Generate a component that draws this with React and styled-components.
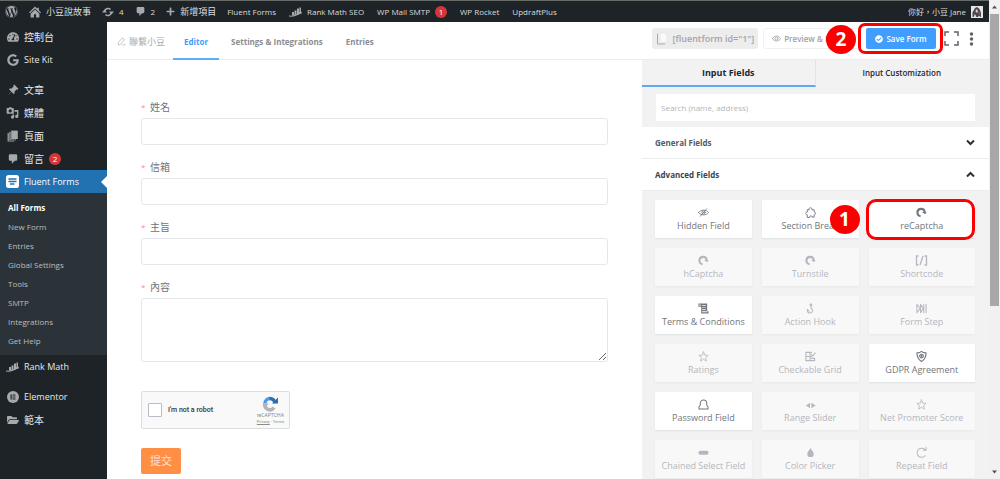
import React from 'react';
import styled, { createGlobalStyle, css } from 'styled-components';
import { FaWordpress, FaTachometerAlt, FaGoogle, FaFolderOpen, FaPlus, FaCheckCircle } from 'react-icons/fa';

const GlobalStyle = createGlobalStyle`
  *, *::before, *::after { box-sizing: border-box; }
  body {
    margin: 0;
    font-family: "Open Sans", "Noto Sans CJK TC", sans-serif;
    font-size: 8px;
    line-height: 12px;
    color: #6f7278;
    background: #fff;
  }
  button, input, textarea { font: inherit; color: inherit; margin: 0; }
  button { cursor: pointer; }
  a { color: inherit; text-decoration: none; }
  ul { list-style: none; margin: 0; padding: 0; }
  svg { display: block; flex: none; }
`;

/* ---------- shell ---------- */

const Screen = styled.div`
  display: flex;
  height: 100vh;
  overflow: hidden;
`;

const Page = styled.div`
  flex: 1;
  min-width: 0;
  display: flex;
  flex-direction: column;
`;

const Body = styled.div`
  flex: 1;
  min-height: 0;
  display: flex;
`;

const ScrollTrack = styled.div`
  flex: none;
  width: 11px;
  display: flex;
  flex-direction: column;
  align-items: center;
  background: #f1f1f2;
`;

const ScrollArrow = styled.div`
  height: 14px;
  display: flex;
  align-items: center;
  color: #505050;
`;

const ScrollThumb = styled.div`
  width: 9px;
  height: 61%;
  margin-bottom: auto;
  background: #a8a8ab;
`;

/* ---------- admin bar ---------- */

const AdminBar = styled.nav`
  flex: none;
  height: 22px;
  display: flex;
  align-items: center;
  gap: 11px;
  padding: 0 6px 0 5px;
  border-top: 1px solid #686c68;
  background: #1d2327;
  color: #dcdcde;
`;

const AdminLink = styled.a`
  display: flex;
  align-items: center;
  gap: 5px;
  white-space: nowrap;
  &:lang(zh-Hant) { font-size: 9px; }
  svg { color: #a7aaad; }
`;

const PluginLinks = styled.div`
  display: flex;
  align-items: center;
  gap: 13px;
`;

const Greeting = styled(AdminLink)`
  margin-left: auto;
`;

const CountBadge = styled.span`
  width: 12px;
  height: 12px;
  border-radius: 50%;
  background: #d63638;
  color: #fff;
  font-size: 8px;
  line-height: 12px;
  text-align: center;
`;

/* ---------- side menu ---------- */

const SideMenu = styled.aside`
  flex: none;
  width: 107px;
  padding-top: 3px;
  background: #1d2327;
  color: #f0f0f1;
`;

const MenuItem = styled.li`
  margin-top: ${(p) => (p.$spaced ? 7 : 0)}px;
`;

const MenuLink = styled.a`
  position: relative;
  display: flex;
  align-items: center;
  gap: 5px;
  height: 23px;
  padding-left: 6px;
  font-size: 9px;
  background: ${(p) => (p.$current ? '#2271b1' : 'transparent')};
  color: ${(p) => (p.$current ? '#fff' : '#e8e8ea')};
  &:lang(zh-Hant) { font-size: 10px; }
  svg { color: ${(p) => (p.$current ? '#fff' : '#a7aaad')}; }
  ${(p) => p.$current && css`
    &::after {
      content: "";
      position: absolute;
      right: 0;
      top: 6px;
      border: 6px solid transparent;
      border-left: 0;
      border-right-color: #fff;
    }
  `}
`;

const SubMenu = styled.ul`
  padding: 5px 0;
  background: #2c3338;
`;

const SubLink = styled.a`
  display: block;
  padding-left: 8px;
  line-height: 19px;
  font-weight: ${(p) => (p.$current ? 700 : 400)};
  color: ${(p) => (p.$current ? '#fff' : '#b9bdc1')};
`;

/* ---------- editor header ---------- */

const Main = styled.main`
  flex: 1;
  min-width: 0;
  display: flex;
  flex-direction: column;
  background: #fff;
`;

const EditorHeader = styled.header`
  flex: none;
  height: 38px;
  display: flex;
  align-items: stretch;
  padding: 0 15px 0 10px;
  border-bottom: 1px solid #ebecee;
`;

const FormTitle = styled.button`
  display: flex;
  align-items: center;
  gap: 3px;
  width: 56px;
  padding: 2px 0 0;
  border: 0;
  background: none;
  color: #a9abb0;
  font-size: 9px;
  white-space: nowrap;
`;

const HeaderTab = styled.a`
  display: flex;
  align-items: center;
  padding: 3px 11px 0;
  margin-bottom: -1px;
  margin-right: 1px;
  border-bottom: 2px solid ${(p) => (p.$active ? '#5fadfb' : 'transparent')};
  color: ${(p) => (p.$active ? '#409eff' : '#8a8d93')};
  font-weight: 700;
  white-space: nowrap;
`;

const HeaderActions = styled.div`
  display: flex;
  align-items: center;
  margin-left: auto;
  padding-bottom: 4px;
`;

const Shortcode = styled.button`
  display: flex;
  align-items: center;
  gap: 5px;
  height: 21px;
  padding: 0 4px;
  border: 0;
  border-radius: 3px;
  background: #ededee;
  color: #a2a4aa;
  font-size: 9px;
  font-weight: 600;
  white-space: nowrap;
`;

const PreviewButton = styled.button`
  display: flex;
  align-items: center;
  gap: 3px;
  height: 21px;
  margin: 0 6px 0 5px;
  padding: 0 8px;
  border: 1px solid #eff0f2;
  border-radius: 3px;
  background: #fff;
  color: #a0a2a8;
  font-weight: 600;
  white-space: nowrap;
`;

const Marked = styled.div`
  position: relative;
`;

const SaveButton = styled.button`
  display: flex;
  align-items: center;
  gap: 3px;
  height: 21px;
  width: 70px;
  justify-content: center;
  padding: 0;
  border: 0;
  border-radius: 2px;
  background: #409eff;
  color: #fff;
  font-weight: 600;
  white-space: nowrap;
`;

const IconButton = styled.button`
  display: flex;
  padding: 0;
  border: 0;
  background: none;
  color: #5f6368;
`;

const HeaderIcons = styled.div`
  display: flex;
  align-items: center;
  gap: 10px;
  margin-left: 8px;
`;

/* red tutorial marks lying over the controls */
const MarkFrame = styled.span`
  position: absolute;
  inset: ${(p) => p.$inset};
  border: 3px solid #fb0000;
  border-radius: ${(p) => p.$radius}px;
  pointer-events: none;
`;

const MarkNumber = styled.span`
  position: absolute;
  top: 50%;
  right: 100%;
  width: 30px;
  height: 29px;
  margin: -14px ${(p) => p.$gap}px 0 0;
  border-radius: 50%;
  background: #fb0000;
  color: #fff;
  font-size: 19px;
  font-weight: 700;
  line-height: 28px;
  text-align: center;
`;

/* ---------- form canvas ---------- */

const Columns = styled.div`
  flex: 1;
  min-height: 0;
  display: grid;
  grid-template-columns: minmax(0, 535fr) minmax(0, 347fr);
`;

const FormCanvas = styled.form`
  padding: 36px 34px 5px;
  overflow: hidden;
`;

const Field = styled.div`
  margin-bottom: 11px;
`;

const FieldLabel = styled.label`
  display: flex;
  gap: 5px;
  font-size: 10px;
  line-height: 22px;
  &::before { content: "*"; width: 4px; color: #f78989; font-size: 8px; }
`;

const inputBox = css`
  display: block;
  width: 100%;
  padding: 0 8px;
  border: 1px solid #e6e7eb;
  border-radius: 3px;
  background: #fff;
`;

const TextInput = styled.input`
  ${inputBox}
  height: 27px;
`;

const TextArea = styled.textarea`
  ${inputBox}
  height: 64px;
  resize: vertical;
`;

const Captcha = styled.div`
  display: flex;
  align-items: center;
  width: 149px;
  height: 38px;
  margin: 29px 0 19px;
  padding: 0 5px 0 6px;
  border: 1px solid #dcdddf;
  border-radius: 2px;
  background: #f9f9f9;
  font-family: Roboto, sans-serif;
`;

const CaptchaLabel = styled.label`
  display: flex;
  align-items: center;
  gap: 6px;
  color: #333;
  font-size: 7px;
  font-weight: 500;
  white-space: nowrap;
`;

const CaptchaCheck = styled.input`
  appearance: none;
  width: 14px;
  height: 14px;
  border: 1px solid #b9bbc6;
  border-radius: 1px;
  background: #fff;
`;

const CaptchaBrand = styled.div`
  display: flex;
  flex-direction: column;
  align-items: center;
  margin-left: auto;
  color: #8b8b8b;
  font-size: 5px;
  line-height: 7px;
  white-space: nowrap;
`;

const CaptchaLinks = styled.span`
  font-size: 4px;
  line-height: 6px;
  a:first-child { text-decoration: underline; }
`;

const SubmitButton = styled.button`
  display: block;
  height: 26px;
  padding: 0 9px;
  border: 0;
  border-radius: 2px;
  background: #ff8f45;
  color: #ffe0d2;
  font-size: 11px;
`;

/* ---------- fields panel ---------- */

const Panel = styled.section`
  overflow: hidden;
  background: #f2f2f2;
`;

const PanelTabs = styled.div`
  display: grid;
  grid-template-columns: 1fr 1fr;
`;

const PanelTab = styled.button`
  height: 27px;
  padding: 0;
  border: 0;
  border-bottom: 2px solid ${(p) => (p.$active ? '#5fa9f4' : 'transparent')};
  border-right: 1px solid ${(p) => (p.$active ? '#e2e3e5' : 'transparent')};
  background: none;
  color: #1e2633;
  font-size: ${(p) => (p.$active ? 9 : 8)}px;
  line-height: 22px;
  font-weight: ${(p) => (p.$active ? 700 : 600)};
`;

const SearchBox = styled.input`
  display: block;
  width: calc(100% - 28px);
  height: 27px;
  margin: 7px 14px 6px;
  padding: 0 5px;
  border: 0;
  background: #fff;
  &::placeholder { color: #b3b5bc; opacity: 1; }
`;

const SectionToggle = styled.button`
  display: flex;
  align-items: center;
  justify-content: space-between;
  width: 100%;
  height: 32px;
  padding: 0 14px 0 13px;
  border: 0;
  border-bottom: 1px solid #ebecee;
  background: #fff;
  color: ${(p) => (p.$open ? '#3d434d' : '#555a63')};
  font-weight: 700;
`;

const CardGrid = styled.div`
  display: grid;
  grid-template-columns: 1fr 1fr 1.1fr;
  gap: 10px;
  padding: 9px 14px 9px 13px;
`;

const Card = styled.button`
  display: flex;
  flex-direction: column;
  align-items: center;
  justify-content: center;
  gap: 1px;
  width: 100%;
  height: 38px;
  padding: 0;
  border: 0;
  border-radius: 1px;
  background: ${(p) => (p.$muted ? '#f8f8f8' : '#fff')};
  box-shadow: 0 1px 2px ${(p) => (p.$muted ? '#e8e8e9' : '#dedfe1')};
  color: ${(p) => (p.$muted ? '#b4b7be' : '#73767d')};
  font-size: 9px;
  line-height: 13px;
  white-space: nowrap;
`;

/* ---------- drawings ---------- */

const Line = ({ size = 11, w = 1.8, children }) => (
  <svg width={size} height={size} viewBox="0 0 24 24" fill="none" stroke="currentColor" strokeWidth={w} strokeLinecap="round" strokeLinejoin="round">
    {children}
  </svg>
);

const HomeIcon = () => (
  <svg width="12" height="12" viewBox="0 0 22 22" fill="currentColor">
    <path d="M11 1l4 4V3h3v5l4 4-1.500 1.500L11 4.500l-9.500 9L0 12z" />
    <path d="M11 6.500l8 7.500v7h-6v-6H9v6H3v-7z" />
  </svg>
);

const UpdateIcon = () => (
  <svg width="12" height="12" viewBox="0 0 24 24">
    <path d="M5 12a7 7 0 0 1 12-5M19 12a7 7 0 0 1-12 5" fill="none" stroke="currentColor" strokeWidth="3" />
    <path d="M14 11h10l-5 6zM10 13H0l5-6z" fill="currentColor" />
  </svg>
);

const PinIcon = () => (
  <svg width="12" height="12" viewBox="0 0 20 20" fill="currentColor">
    <path d="M12 1l7 7-1.500 1.500-1.500-.5-3.500 3.500c.5 2 0 3.500-1 4.500L7.500 13 1 19l6-6.500L3 8.500c1-1 2.500-1.500 4.500-1L11 4l-.5-1.500z" />
  </svg>
);

const CommentIcon = ({ size = 11 }) => (
  <svg width={size} height={size} viewBox="0 0 20 20" fill="currentColor">
    <path d="M5 2h10a2 2 0 0 1 2 2v7a2 2 0 0 1-2 2h-2l-5 5v-5H5a2 2 0 0 1-2-2V4a2 2 0 0 1 2-2z" />
  </svg>
);

const RankMathIcon = () => (
  <svg width="13" height="11" viewBox="0 0 26 22" fill="currentColor">
    <path d="M6 12h4v7H6zM11 9h4v9h-4zM16 5h4v12h-4zM21 3h3v12h-3z" />
    <path d="M0 19c7 1 14-1 21-6l-1-2 6 1-2 5-1-2c-7 5-15 7-23 6z" />
  </svg>
);

const MediaIcon = () => (
  <svg width="13" height="13" viewBox="0 0 20 20" fill="currentColor">
    <path fillRule="evenodd" d="M2 3h2l1-1h3l1 1h2a1 1 0 0 1 1 1v7a1 1 0 0 1-1 1H2a1 1 0 0 1-1-1V4a1 1 0 0 1 1-1zm4.500 2a2.500 2.500 0 1 0 0 5 2.500 2.500 0 0 0 0-5z" />
    <path d="M13 6h6v10a2.500 2.500 0 1 1-2-2.400V9h-4zM10 13h2.500v4a2.500 2.500 0 1 1-2.500-2.500z" />
  </svg>
);

const PagesIcon = () => (
  <svg width="12" height="12" viewBox="0 0 20 20" fill="currentColor">
    <path d="M7 1h11v14H7z" />
    <path d="M4 3h2v13h9v1H4z" />
    <path d="M1 5h2v13h9v1H1z" />
  </svg>
);

const FluentIcon = () => (
  <svg width="13" height="13" viewBox="0 0 26 26">
    <rect width="26" height="26" rx="5" fill="#fff" />
    <path d="M5 8h16M5 13h16M8 18h9" stroke="#2271b1" strokeWidth="3" />
  </svg>
);

const ElementorIcon = () => (
  <svg width="12" height="12" viewBox="0 0 24 24">
    <circle cx="12" cy="12" r="12" fill="currentColor" />
    <path d="M7 7h2.400v10H7zM11 7h6v2h-6zM11 11h6v2h-6zM11 15h6v2h-6z" fill="#1d2327" />
  </svg>
);

const CopyIcon = () => (
  <svg width="12" height="14" viewBox="0 0 24 28">
    <path d="M8 2h9l5 5v14H8z" fill="#f9f9fa" stroke="#dcdde0" />
    <path d="M3 3v21h15" fill="none" stroke="#a8aab0" strokeWidth="2" />
  </svg>
);

const PencilIcon = () => (
  <Line size={9}>
    <path d="M15 3l5 4L9 20l-6 1 1-6zM15 21h7" />
  </Line>
);

const EyeIcon = () => (
  <Line size={9} w={2.2}>
    <path d="M1 12c5-9 17-9 22 0-5 9-17 9-22 0z" />
    <circle cx="12" cy="12" r="4" />
  </Line>
);

const FullscreenIcon = () => (
  <svg width="15" height="15" viewBox="0 0 30 30" fill="none" stroke="currentColor" strokeWidth="3">
    <path d="M2 10V2h8M20 2h8v8M28 20v8h-8M10 28H2v-8" />
  </svg>
);

const MoreIcon = () => (
  <svg width="5" height="14" viewBox="0 0 10 28" fill="currentColor">
    <circle cx="5" cy="4" r="3.500" />
    <circle cx="5" cy="14" r="3.500" />
    <circle cx="5" cy="24" r="3.500" />
  </svg>
);

const Chevron = ({ up }) => (
  <svg width="9" height="9" viewBox="0 0 18 18" fill="none" stroke="#2c3038" strokeWidth="4">
    <path d={up ? 'M2 13l7-7 7 7' : 'M2 5l7 7 7-7'} />
  </svg>
);

const Triangle = ({ up }) => (
  <svg width="5" height="4" viewBox="0 0 10 8" fill="#505050">
    <path d={up ? 'M5 1l5 6H0z' : 'M5 7l5-6H0z'} />
  </svg>
);

const Avatar = () => (
  <svg width="12" height="12" viewBox="0 0 24 24">
    <rect width="24" height="24" fill="#e6e6e6" />
    <path d="M3 22V13l5-9 4-2 5 4 3 8v8z" fill="#43464b" />
    <path d="M10 6l4 3-1 5-4-2z" fill="#d9c9c4" />
    <path d="M14 12l5 2-3 4z" fill="#c64b4b" />
    <path d="M5 22l3-6 3 6zM14 22l2-3 3 3z" fill="#dcdcdc" />
  </svg>
);

const RecaptchaLogo = () => (
  <svg width="17" height="16" viewBox="0 0 34 32" fill="none" strokeWidth="7">
    <path d="M6 15A10 10 0 0 1 16 5" stroke="#4a9bf0" />
    <path d="M15 5a10 10 0 0 1 11 9" stroke="#2a6fae" />
    <path d="M20 15h12V3z" fill="#2a6fae" />
    <path d="M6 15a10 10 0 0 0 18 8" stroke="#b4b4b4" />
    <path d="M1 15h13L5 25z" fill="#b4b4b4" />
  </svg>
);

const Swirl = () => (
  <svg width="11" height="11" viewBox="0 0 24 24" fill="none" stroke="currentColor" strokeWidth="4.500">
    <path d="M10 20A8 8 0 1 1 19 11" />
    <path d="M13 11h10l-3 5z" fill="currentColor" stroke="none" />
  </svg>
);

const StarIcon = () => (
  <Line><path d="M12 2l3 7 7 .6-5.400 4.700L18.400 22 12 17.800 5.600 22l1.800-7.700L2 9.600 9 9z" /></Line>
);

const cardIcons = {
  hidden: <Line><path d="M1 12c5-7 17-7 22 0-5 7-17 7-22 0zM19 4L5 20" /><circle cx="12" cy="12" r="3.500" /></Line>,
  puzzle: <Line w={2}><path d="M5 22v-5c-5 0-5-6 0-6V6h4c-2-6 8-6 6 0h5v5c4 0 4 6 0 6v5h-5c1-4-6-4-5 0z" /></Line>,
  swirl: <Swirl />,
  shortcode: <svg width="13" height="11" viewBox="0 0 26 22" fill="none" stroke="currentColor" strokeWidth="2.600"><path d="M7 2H3v18h4M19 2h4v18h-4M16 2l-6 18" /></svg>,
  scroll: <svg width="11" height="11" viewBox="0 0 24 24" fill="currentColor"><path fillRule="evenodd" d="M1 1h19v17h3v5H7V8H1zM9 5v1.500h8V5zm0 4v1.500h8V9zm0 4v1.500h8V13zm0 5v2h11v-2zM3 3v3h3V3z" /></svg>,
  hook: <Line w={2.2}><circle cx="13" cy="4" r="2" /><path d="M13 6v5c5 3 5 10-2 11-6 0-6-4-6-8l4 4" /></Line>,
  step: <Line w={2.2}><path d="M2 3v18l7-9zM10 3v18l6-9zM17 3v18M22 3v18M10 3l6 9" /></Line>,
  star: <StarIcon />,
  grid: <Line w={2.4}><path d="M2 3h12M2 3v18h19v-5M2 12h12M11 3v18M14 8l3 3 5-7M14 16h7" /></Line>,
  shield: <Line w={2.4}><path d="M12 1c3 3 6 3 10 3 0 9-3 15-10 19C5 19 2 13 2 4c4 0 7 0 10-3z" /><circle cx="12" cy="11" r="4" /><circle cx="12" cy="11" r="1" /></Line>,
  lock: <Line w={2.2}><path d="M2 22h20v-4l-3-5V9c0-9-14-9-14 0v4l-3 5z" /></Line>,
  slider: <svg width="11" height="11" viewBox="0 0 24 24" fill="currentColor"><path d="M2 14l9-6v12zM23 14l-9-6v12z" /></svg>,
  select: <svg width="11" height="11" viewBox="0 0 24 24"><rect x="1" y="8" width="22" height="9" rx="4" fill="currentColor" /></svg>,
  drop: <svg width="11" height="11" viewBox="0 0 24 24" fill="currentColor"><path d="M12 2c3 5 7 9 7 13a7 7 0 0 1-14 0c0-4 4-8 7-13z" /></svg>,
  repeat: <Line w={2.2}><path d="M20 19a10 10 0 1 1 0-13M22 1v6h-6" /></Line>,
};

/* ---------- data ---------- */

const menu = [
  { label: '控制台', zh: true, icon: <FaTachometerAlt size={12} /> },
  { label: 'Site Kit', icon: <FaGoogle size={12} /> },
  { label: '文章', zh: true, spaced: true, icon: <PinIcon /> },
  { label: '媒體', zh: true, icon: <MediaIcon /> },
  { label: '頁面', zh: true, icon: <PagesIcon /> },
  { label: '留言', zh: true, icon: <CommentIcon size={12} />, count: 2 },
  {
    label: 'Fluent Forms',
    icon: <FluentIcon />,
    children: ['All Forms', 'New Form', 'Entries', 'Global Settings', 'Tools', 'SMTP', 'Integrations', 'Get Help'],
  },
  { label: 'Rank Math', icon: <RankMathIcon /> },
  { label: 'Elementor', spaced: true, icon: <ElementorIcon /> },
  { label: '範本', zh: true, icon: <FaFolderOpen size={12} /> },
];

const cards = [
  ['Hidden Field', 'hidden', true],
  ['Section Break', 'puzzle', true],
  ['reCaptcha', 'swirl', true],
  ['hCaptcha', 'swirl'],
  ['Turnstile', 'swirl'],
  ['Shortcode', 'shortcode'],
  ['Terms & Conditions', 'scroll', true],
  ['Action Hook', 'hook'],
  ['Form Step', 'step'],
  ['Ratings', 'star'],
  ['Checkable Grid', 'grid'],
  ['GDPR Agreement', 'shield', true],
  ['Password Field', 'lock', true],
  ['Range Slider', 'slider'],
  ['Net Promoter Score', 'star'],
  ['Chained Select Field', 'select'],
  ['Color Picker', 'drop'],
  ['Repeat Field', 'repeat'],
];

const IconSlot = styled.span`
  flex: none;
  width: 13px;
  display: flex;
  justify-content: center;
`;

export default function App() {
  return (
    <Screen>
      <GlobalStyle />
      <Page>
        <AdminBar>
          <AdminLink href="#wp" aria-label="WordPress"><FaWordpress size={13} /></AdminLink>
          <AdminLink href="#site" lang="zh-Hant"><HomeIcon />小豆說故事</AdminLink>
          <AdminLink href="#updates"><UpdateIcon />4</AdminLink>
          <AdminLink href="#comments"><CommentIcon />2</AdminLink>
          <AdminLink href="#new" lang="zh-Hant"><FaPlus size={9} />新增項目</AdminLink>
          <PluginLinks>
            <AdminLink href="#fluent">Fluent Forms</AdminLink>
            <AdminLink href="#rank"><RankMathIcon />Rank Math SEO</AdminLink>
            <AdminLink href="#smtp">WP Mail SMTP<CountBadge>1</CountBadge></AdminLink>
            <AdminLink href="#rocket">WP Rocket</AdminLink>
            <AdminLink href="#updraft">UpdraftPlus</AdminLink>
          </PluginLinks>
          <Greeting href="#profile"><span>你好，小豆 Jane</span><Avatar /></Greeting>
        </AdminBar>
        <Body>
          <SideMenu>
            <ul>
              {menu.map((m) => (
                <MenuItem key={m.label} $spaced={m.spaced}>
                  <MenuLink href="#menu" $current={!!m.children} lang={m.zh ? 'zh-Hant' : 'en'}>
                    <IconSlot>{m.icon}</IconSlot>
                    {m.label}
                    {m.count && <CountBadge>{m.count}</CountBadge>}
                  </MenuLink>
                  {m.children && (
                    <SubMenu>
                      {m.children.map((c, i) => (
                        <li key={c}><SubLink href="#sub" $current={i === 0}>{c}</SubLink></li>
                      ))}
                    </SubMenu>
                  )}
                </MenuItem>
              ))}
            </ul>
          </SideMenu>
          <Main>
            <EditorHeader>
              <FormTitle type="button"><PencilIcon />聯繫小豆</FormTitle>
              <HeaderTab href="#editor" $active>Editor</HeaderTab>
              <HeaderTab href="#settings">Settings &amp; Integrations</HeaderTab>
              <HeaderTab href="#entries">Entries</HeaderTab>
              <HeaderActions>
                <Shortcode type="button"><CopyIcon />[fluentform id="1"]</Shortcode>
                <PreviewButton type="button"><EyeIcon />Preview &amp; Design</PreviewButton>
                <Marked>
                  <SaveButton type="button"><FaCheckCircle size={8} />Save Form</SaveButton>
                  <MarkFrame $inset="-5px -7px -5px -8px" $radius={7} />
                  <MarkNumber $gap={10}>2</MarkNumber>
                </Marked>
                <HeaderIcons>
                  <IconButton type="button" aria-label="Fullscreen"><FullscreenIcon /></IconButton>
                  <IconButton type="button" aria-label="More"><MoreIcon /></IconButton>
                </HeaderIcons>
              </HeaderActions>
            </EditorHeader>
            <Columns>
              <FormCanvas>
                {['姓名', '信箱', '主旨'].map((label, i) => (
                  <Field key={label}>
                    <FieldLabel htmlFor={`field-${i}`}>{label}</FieldLabel>
                    <TextInput id={`field-${i}`} />
                  </Field>
                ))}
                <FieldLabel htmlFor="field-message">內容</FieldLabel>
                <TextArea id="field-message" />
                <Captcha>
                  <CaptchaLabel><CaptchaCheck type="checkbox" />I'm not a robot</CaptchaLabel>
                  <CaptchaBrand>
                    <RecaptchaLogo />
                    reCAPTCHA
                    <CaptchaLinks><a href="#privacy">Privacy</a> - <a href="#terms">Terms</a></CaptchaLinks>
                  </CaptchaBrand>
                </Captcha>
                <SubmitButton type="button">提交</SubmitButton>
              </FormCanvas>
              <Panel>
                <PanelTabs>
                  <PanelTab type="button" $active>Input Fields</PanelTab>
                  <PanelTab type="button">Input Customization</PanelTab>
                </PanelTabs>
                <SearchBox type="text" aria-label="Search fields" placeholder="Search (name, address)" />
                <SectionToggle type="button">General Fields<Chevron /></SectionToggle>
                <SectionToggle type="button" $open>Advanced Fields<Chevron up /></SectionToggle>
                <CardGrid>
                  {cards.map(([label, icon, enabled]) => (
                    <Marked key={label}>
                      <Card type="button" $muted={!enabled}>{cardIcons[icon]}{label}</Card>
                      {label === 'reCaptcha' && (
                        <>
                          <MarkFrame $inset="-1px 0 -2px -3px" $radius={10} />
                          <MarkNumber $gap={9}>1</MarkNumber>
                        </>
                      )}
                    </Marked>
                  ))}
                </CardGrid>
              </Panel>
            </Columns>
          </Main>
        </Body>
      </Page>
      <ScrollTrack>
        <ScrollArrow><Triangle up /></ScrollArrow>
        <ScrollThumb />
        <ScrollArrow><Triangle /></ScrollArrow>
      </ScrollTrack>
    </Screen>
  );
}
